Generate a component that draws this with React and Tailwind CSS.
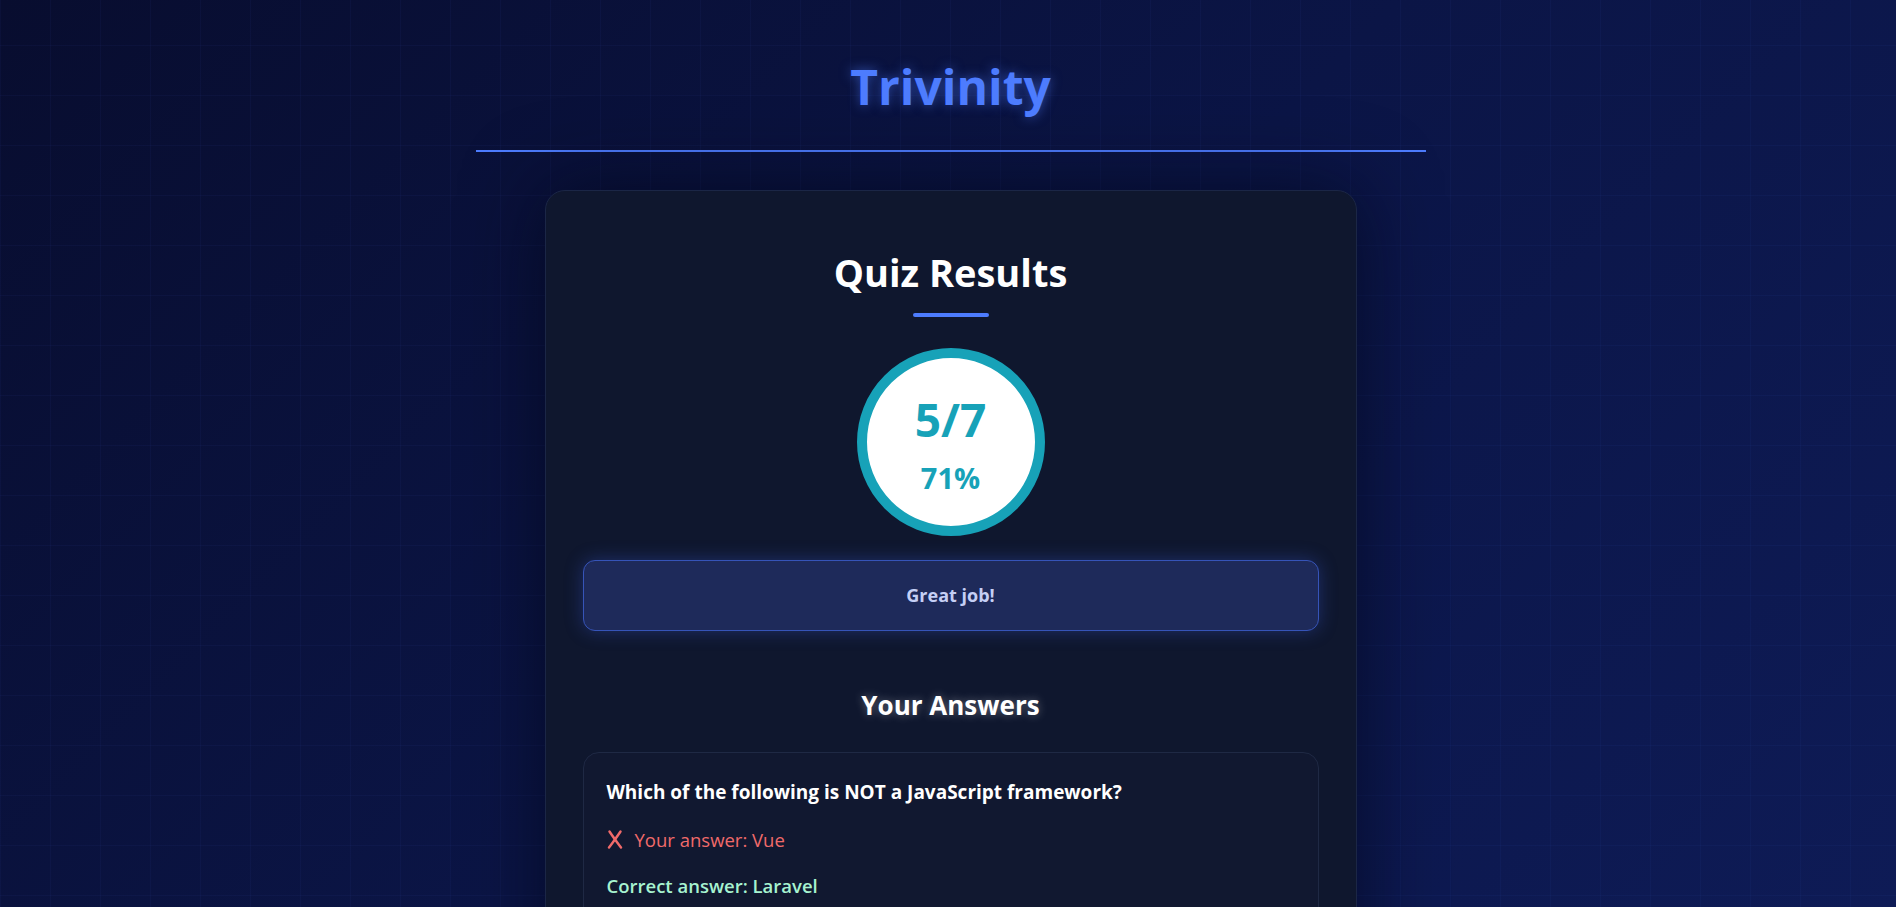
import React from 'react';

const answers = [
  {
    question: 'Which of the following is NOT a JavaScript framework?',
    yours: 'Vue',
    correct: 'Laravel',
    right: false,
  },
  {
    question: 'What does CSS stand for?',
    yours: 'Cascading Style Sheets',
    correct: 'Cascading Style Sheets',
    right: true,
  },
  {
    question: 'Which HTML tag is used to define an internal style sheet?',
    yours: '<style>',
    correct: '<style>',
    right: true,
  },
];

function CrossMark() {
  return (
    <svg width="16" height="19" viewBox="0 0 16 19" className="mr-[12px] shrink-0" fill="none">
      <path d="M2.5 1.5 C6 7, 10 12, 14 17.5" stroke="currentColor" strokeWidth="2.4" strokeLinecap="round" />
      <path d="M13.5 1.5 C10 7, 6 12, 2 17.5" stroke="currentColor" strokeWidth="2.4" strokeLinecap="round" />
    </svg>
  );
}

function CheckMark() {
  return (
    <svg width="18" height="19" viewBox="0 0 18 19" className="mr-[10px] shrink-0" fill="none">
      <path d="M2 10 L7 15.5 L16 3" stroke="currentColor" strokeWidth="2.4" strokeLinecap="round" strokeLinejoin="round" />
    </svg>
  );
}

function AnswerCard({ item }) {
  return (
    <div className="rounded-[16px] border border-[#1f2944] bg-[#111830] px-[23px] pt-[27px] pb-[26px]">
      <p className="text-[19px] leading-[24px] font-bold text-white">{item.question}</p>
      {item.right ? (
        <p className="mt-[24px] flex items-center text-[18.5px] leading-[24px] text-[#a7f3d0]">
          <CheckMark />
          Your answer: {item.yours}
        </p>
      ) : (
        <>
          <p className="mt-[24px] flex items-center text-[18.5px] leading-[24px] text-[#f06a6a]">
            <CrossMark />
            Your answer: {item.yours}
          </p>
          <p className="mt-[22px] text-[18.5px] leading-[24px] font-semibold text-[#a7f3d0]">
            Correct answer: {item.correct}
          </p>
        </>
      )}
    </div>
  );
}

export default function App() {
  return (
    <div className="min-h-screen pl-[5px] pb-[60px] font-['Open_Sans','Noto_Sans',sans-serif] [background-attachment:fixed] [background-image:linear-gradient(rgba(80,120,255,0.045)_1px,transparent_1px),linear-gradient(90deg,rgba(80,120,255,0.045)_1px,transparent_1px),linear-gradient(135deg,#080d2f_0%,#0b1546_50%,#0e1b56_100%)] [background-size:50px_50px,50px_50px,100%_100%] [background-position:0_45px,0_0,0_0]">
      {/* Header */}
      <header className="mx-auto w-[950px] pt-[56px] pb-[32px] border-b-2 border-[#4d7cfe] text-center">
        <h1 className="text-[48px] leading-[1.3] font-bold text-[#4d7cfe] [text-shadow:0_0_12px_rgba(77,124,254,0.55)]">
          Trivinity
        </h1>
      </header>

      {/* Results card */}
      <main className="mx-auto mt-[38px] w-[812px] rounded-[20px] border border-[#1b2646] bg-[#0f172e] px-[37px] pt-[57px] pb-[40px] shadow-[0_0_80px_rgba(2,6,23,0.65)]">
        <h2 className="text-center text-[38px] leading-[1.3] font-bold text-white">Quiz Results</h2>
        <div className="mx-auto mt-[15px] h-[4px] w-[76px] rounded-full bg-[#4d7cfe]" />

        <div className="mx-auto mt-[31px] flex h-[188px] w-[188px] flex-col items-center rounded-full border-[10px] border-[#17a2b8] bg-white pt-[38px] text-[#17a2b8]">
          <span className="text-[46px] leading-none font-bold">5/7</span>
          <span className="mt-[21px] text-[29px] leading-none font-bold">71%</span>
        </div>

        <div className="mt-[24px] flex h-[71px] items-center justify-center rounded-[12px] border border-[#3654b8] bg-[#1e2a5a] shadow-[0_0_18px_rgba(59,92,220,0.35)]">
          <p className="text-[18px] font-bold text-[#c5cff5]">Great job!</p>
        </div>

        <h3 className="mt-[58px] text-center text-[26px] leading-[1.3] font-bold text-white [text-shadow:0_0_10px_rgba(255,255,255,0.35)]">
          Your Answers
        </h3>

        <div className="mt-[29px] flex flex-col gap-[20px]">
          {answers.map((item, i) => (
            <AnswerCard key={i} item={item} />
          ))}
        </div>
      </main>
    </div>
  );
}
